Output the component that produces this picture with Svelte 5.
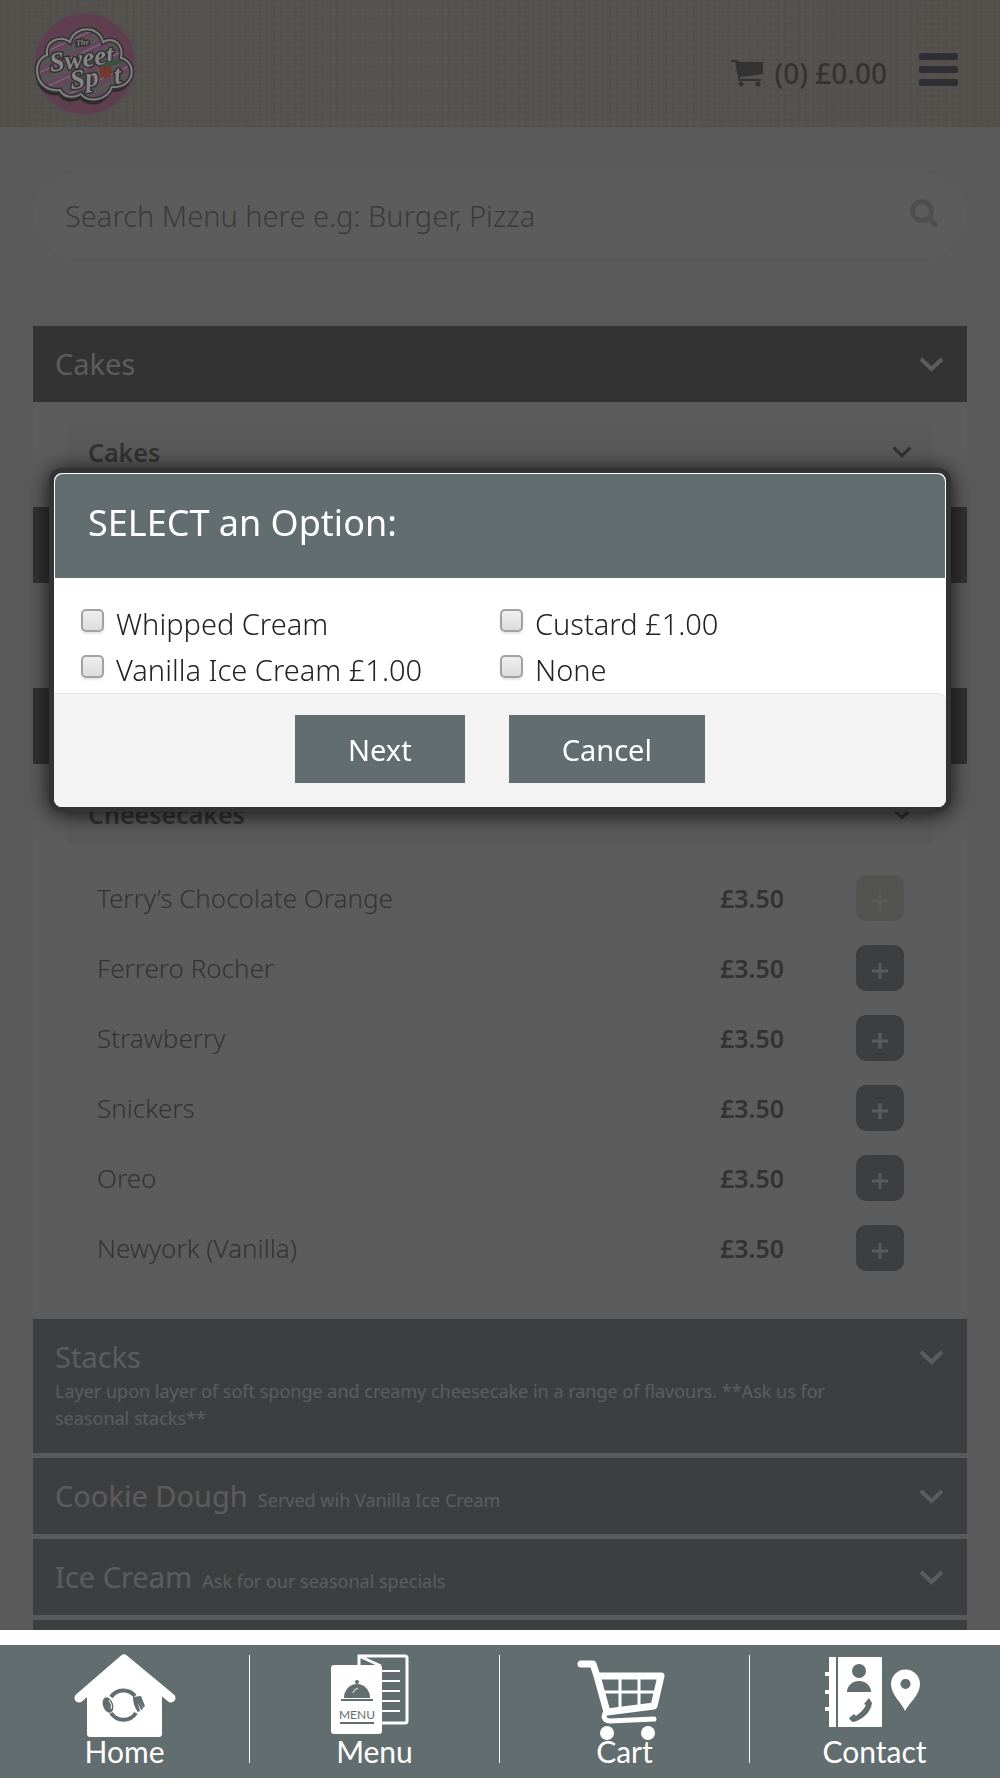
<script lang="ts">
    let search = $state('');
    let modalOpen = $state(true);

    let options = $state([
        { id: 'whipped', label: 'Whipped Cream', checked: false },
        { id: 'custard', label: 'Custard £1.00', checked: false },
        { id: 'vanilla', label: 'Vanilla Ice Cream £1.00', checked: false },
        { id: 'none', label: 'None', checked: false }
    ]);

    const cheesecakes = [
        { name: 'Terry’s Chocolate Orange', price: '£3.50', pending: true },
        { name: 'Ferrero Rocher', price: '£3.50', pending: false },
        { name: 'Strawberry', price: '£3.50', pending: false },
        { name: 'Snickers', price: '£3.50', pending: false },
        { name: 'Oreo', price: '£3.50', pending: false },
        { name: 'Newyork (Vanilla)', price: '£3.50', pending: false }
    ];

    function closeModal() {
        modalOpen = false;
    }
</script>

{#snippet chevron()}
    <svg class="chevron" viewBox="0 0 25 15" aria-hidden="true">
        <path d="M2 2 L12.5 12 L23 2" fill="none" stroke="currentColor" stroke-width="4" />
    </svg>
{/snippet}

{#snippet logo()}
    <svg class="logo" viewBox="0 0 104 106" role="img" aria-label="The Sweet Spot">
        <defs>
            <pattern id="stripes" width="16" height="16" patternUnits="userSpaceOnUse" patternTransform="rotate(-25)">
                <rect width="16" height="16" fill="#66465a" />
                <rect width="16" height="6" fill="#555" />
                <rect y="10" width="16" height="1" fill="#777" />
            </pattern>
        </defs>
        <circle cx="52" cy="53" r="51" fill="#5f3f4f" stroke="#554e52" stroke-width="2" />
        <path
            d="M14 44 C12 29 28 24 37 31 C42 14 66 14 70 31 C81 25 91 34 88 47 C104 51 103 77 79 76 C74 90 55 92 48 83 C40 88 30 86 27 79 C2 82 -3 50 14 44 Z"
            transform="translate(-1 5)"
            fill="#2b2b2b"
        />
        <path
            d="M14 44 C12 29 28 24 37 31 C42 14 66 14 70 31 C81 25 91 34 88 47 C104 51 103 77 79 76 C74 90 55 92 48 83 C40 88 30 86 27 79 C2 82 -3 50 14 44 Z"
            fill="url(#stripes)"
            stroke="#333"
            stroke-width="5"
        />
        <path
            d="M14 44 C12 29 28 24 37 31 C42 14 66 14 70 31 C81 25 91 34 88 47 C104 51 103 77 79 76 C74 90 55 92 48 83 C40 88 30 86 27 79 C2 82 -3 50 14 44 Z"
            fill="none"
            stroke="#808080"
            stroke-width="2"
        />
        <g class="logo-text" transform="rotate(-8 52 53)">
            <text x="46" y="34" font-size="8">The</text>
            <text x="17" y="56" font-size="27">Sweet</text>
            <text x="35" y="76" font-size="27">Sp</text>
            <text x="79" y="77" font-size="26">t</text>
        </g>
        <path d="M67 56 C72 50 79 53 79 60 C78 66 74 68 71 67 C67 65 65 60 67 56 Z" fill="#74392c" />
        <path d="M68 55 C73 49 82 47 90 51 C84 55 77 53 72 57 Z" fill="#3a5040" />
    </svg>
{/snippet}

<div class="page">
    <header class="topbar">
        {@render logo()}
        <div class="topbar-right">
            <a class="cart-link" href="#cart">
                <svg class="cart-icon" viewBox="0 0 32 28" aria-hidden="true">
                    <path d="M0 1 H7 L8 3 H32 V15 L9 18 L9 20 H30 V22 H7 L7 18 L4 3 H0 Z" />
                    <circle cx="10" cy="25" r="2.5" />
                    <circle cx="27" cy="25" r="2.5" />
                </svg>
                <span>(0) £0.00</span>
            </a>
            <button class="burger" aria-label="Open navigation">
                <span></span>
                <span></span>
                <span></span>
            </button>
        </div>
    </header>

    <main>
        <form class="search" role="search">
            <input
                type="text"
                aria-label="Search menu"
                placeholder="Search Menu here e.g: Burger, Pizza"
                bind:value={search}
            />
            <button type="button" aria-label="Search">
                <svg viewBox="0 0 28 28" aria-hidden="true">
                    <circle cx="12" cy="12" r="9.5" fill="none" stroke="currentColor" stroke-width="5" />
                    <path d="M19 19 L26 26" stroke="currentColor" stroke-width="5" stroke-linecap="round" />
                </svg>
            </button>
        </form>

        <section>
            <button class="category open"><span class="title">Cakes</span>{@render chevron()}</button>
            <div class="panel">
                <button class="subcategory">Cakes{@render chevron()}</button>
            </div>
        </section>

        <section>
            <button class="category open" aria-label="Category">{@render chevron()}</button>
            <div class="panel">
                <button class="subcategory" aria-label="Subcategory"></button>
            </div>
        </section>

        <section>
            <button class="category open" aria-label="Category">{@render chevron()}</button>
            <div class="panel">
                <button class="subcategory">Cheesecakes{@render chevron()}</button>
                <ul class="items">
                    {#each cheesecakes as item}
                        <li>
                            <span class="name">{item.name}</span>
                            <span class="price">{item.price}</span>
                            <button class="add" class:pending={item.pending} aria-label="Add {item.name}">
                                <svg viewBox="0 0 16 16" aria-hidden="true">
                                    <path d="M8 0 V16 M0 8 H16" stroke="currentColor" stroke-width="3" />
                                </svg>
                            </button>
                        </li>
                    {/each}
                </ul>
            </div>
        </section>

        <div class="closed">
            <button class="category">
                <span class="title">Stacks</span>
                <span class="desc">
                    Layer upon layer of soft sponge and creamy cheesecake in a range of flavours. **Ask us for seasonal stacks**
                </span>
                {@render chevron()}
            </button>
            <button class="category">
                <span class="title">Cookie Dough</span>
                <span class="note">Served wih Vanilla Ice Cream</span>
                {@render chevron()}
            </button>
            <button class="category">
                <span class="title">Ice Cream</span>
                <span class="note">Ask for our seasonal specials</span>
                {@render chevron()}
            </button>
            <button class="category" aria-label="Category"></button>
        </div>
    </main>
</div>

{#if modalOpen}
    <div class="overlay">
        <div class="modal" role="dialog" aria-labelledby="modal-title">
            <h2 id="modal-title">SELECT an Option:</h2>
            <div class="options">
                {#each options as option}
                    <div class="option">
                        <input type="checkbox" id={option.id} bind:checked={option.checked} />
                        <label for={option.id}>{option.label}</label>
                    </div>
                {/each}
            </div>
            <div class="actions">
                <button onclick={closeModal}>Next</button>
                <button onclick={closeModal}>Cancel</button>
            </div>
        </div>
    </div>
{/if}

<nav>
    <a href="#home">
        <svg viewBox="0 0 120 84" aria-hidden="true">
            <path d="M14 43 L59 4 L106 43" fill="none" stroke="#fff" stroke-width="9" stroke-linecap="round" stroke-linejoin="round" />
            <path d="M22 40 L59 6 L97 40 V79 Q97 82 94 82 H25 Q22 82 22 79 Z" fill="#fff" />
            <path d="M46 42 A15 15 0 0 1 70 41 M46 58 A15 15 0 0 0 71 58" fill="none" stroke="#626d70" stroke-width="4" />
            <ellipse cx="43" cy="50" rx="5" ry="8" transform="rotate(-20 43 50)" fill="#626d70" />
            <path d="M44 45 Q48 50 46 54" fill="none" stroke="#fff" stroke-width="1" />
            <path
                d="M68 42 L76 41 L80 51 L78 53 L75 47 L78 54 L76 55 L73 48 L75 56 L73 57 Q68 51 68 42 Z"
                fill="#626d70"
            />
        </svg>
        <span>Home</span>
    </a>
    <a href="#menu">
        <svg viewBox="0 0 120 84" aria-hidden="true">
            <path d="M44 12 V1 H90 Q92 1 92 3 V66 Q92 68 90 68 H66 M44 1 L66 11" fill="none" stroke="#fff" stroke-width="3" />
            <rect x="16" y="10" width="51" height="69" rx="3" fill="#fff" />
            <path d="M66 16 H85 M66 26 H85 M66 36 H85 M66 46 H85 M66 56 H85" stroke="#fff" stroke-width="2" />
            <path d="M29 43 A13 14 0 0 1 55 43 Z" fill="#626d70" />
            <path d="M38 38 Q39 34 43 33" fill="none" stroke="#fff" stroke-width="1" />
            <circle cx="42" cy="27" r="2" fill="#626d70" />
            <path d="M26 45 H58 M25 68 H59" stroke="#626d70" stroke-width="2" />
            <text x="42" y="64" font-size="12" text-anchor="middle" fill="#626d70">MENU</text>
        </svg>
        <span>Menu</span>
    </a>
    <a href="#cart">
        <svg viewBox="0 0 120 84" aria-hidden="true">
            <g fill="none" stroke="#fff" stroke-linecap="round" stroke-linejoin="round">
                <path d="M16 9 H28 L32 21 L42 57 L89 51 L96 21 H33" stroke-width="7" />
                <path d="M40 58 L39 62 Q40 66 45 66 L89 64" stroke-width="5" />
                <path d="M37 37 H93 M55 22 V54 M74 22 V52" stroke-width="3" />
            </g>
            <circle cx="42" cy="78" r="7" fill="#fff" />
            <circle cx="83" cy="78" r="7" fill="#fff" />
        </svg>
        <span>Cart</span>
    </a>
    <a href="#contact">
        <svg viewBox="0 0 120 84" aria-hidden="true">
            <path d="M14 2 H21 V72 H14 V56 H10 V52 H14 V39 H10 V35 H14 V21 H10 V17 H14 Z" fill="#fff" />
            <rect x="23" y="2" width="44" height="70" fill="#fff" />
            <circle cx="44" cy="16" r="7" fill="#626d70" />
            <path d="M32 37 A12 11 0 0 1 56 37 Z" fill="#626d70" />
            <path d="M54 43 L57 48 Q55 61 39 67 Q36 67 34 63 L39 59 L41 61 Q48 56 51 50 L49 49 Z" fill="#626d70" />
            <path
                d="M90 56 C87 48 76 40 76 29 A14 14 0 0 1 105 29 C105 40 94 48 90 56 Z M90 24 A5 5 0 1 0 91 24 Z"
                fill="#fff"
                fill-rule="evenodd"
            />
        </svg>
        <span>Contact</span>
    </a>
</nav>

<style>
    :global(body) {
        background: #f4f4f4;
        font-family: 'Noto Sans', 'Open Sans', sans-serif;
        color: #333;
    }

    button,
    input {
        font: inherit;
        color: inherit;
        border: 0;
        margin: 0;
        padding: 0;
        box-sizing: border-box;
    }

    button {
        cursor: pointer;
    }

    .topbar {
        display: flex;
        justify-content: space-between;
        align-items: flex-start;
        box-sizing: border-box;
        height: 127px;
        padding: 11px 42px 0 33px;
        background:
            repeating-linear-gradient(90deg, rgba(90, 60, 30, 0.08) 0 2px, transparent 2px 7px),
            repeating-linear-gradient(0deg, rgba(90, 60, 30, 0.08) 0 2px, transparent 2px 6px),
            linear-gradient(90deg, #dccdb9, #e2ddd0 35%, #ded9d0 70%, #dacbb8);
    }

    /* the logo stays brighter than the dimmed page */
    .logo {
        position: relative;
        z-index: 11;
        width: 104px;
        height: 106px;
    }

    .logo-text {
        font-family: 'Liberation Serif', serif;
        font-style: italic;
        font-weight: bold;
        fill: #858585;
        stroke: #333;
        stroke-width: 3px;
        paint-order: stroke;
    }

    .topbar-right {
        display: flex;
        align-items: center;
        gap: 32px;
        padding-top: 42px;
    }

    .cart-link {
        display: flex;
        align-items: center;
        gap: 12px;
        color: #333;
        font-size: 28px;
        font-weight: 500;
        line-height: 40px;
        text-decoration: none;
    }

    .cart-icon {
        width: 32px;
        height: 28px;
        fill: #333;
    }

    .burger {
        display: flex;
        flex-direction: column;
        align-self: flex-start;
        gap: 6px;
        width: 39px;
        background: none;
    }

    .burger span {
        height: 7px;
        border-radius: 2px;
        background: #14202f;
    }

    main {
        padding: 45px 33px 82px;
    }

    .search {
        display: flex;
        align-items: center;
        height: 87px;
        box-sizing: border-box;
        margin-bottom: 67px;
        padding: 0 28px 0 31px;
        border: 1px solid #f4f4f4;
        border-radius: 44px;
        background: #fff;
    }

    .search input {
        flex: 1;
        min-width: 0;
        font-size: 29px;
        font-weight: 300;
        background: none;
    }

    .search input::placeholder {
        color: #5a5a5a;
        opacity: 1;
    }

    .search button {
        width: 28px;
        padding-bottom: 6px;
        color: #bbb;
        background: none;
    }

    .search svg {
        display: block;
        width: 28px;
        height: 28px;
    }

    .category {
        display: block;
        position: relative;
        width: 100%;
        min-height: 76px;
        padding: 19px 90px 19px 22px;
        background: #666a74;
        color: #fff;
        text-align: left;
    }

    .category.open {
        background: #333;
    }

    .title {
        font-size: 29px;
        font-weight: 400;
        line-height: 38px;
    }

    .note,
    .desc {
        font-size: 18px;
        line-height: 27px;
    }

    .note {
        margin-left: 6px;
    }

    .desc {
        display: block;
        padding: 2px 0;
    }

    .chevron {
        width: 25px;
        height: 15px;
    }

    .category .chevron {
        position: absolute;
        top: 31px;
        right: 23px;
    }

    .panel {
        padding: 22px 33px 25px;
        border-radius: 0 0 8px 8px;
        background: #fff;
    }

    .subcategory {
        display: flex;
        align-items: center;
        justify-content: space-between;
        width: 100%;
        height: 58px;
        padding: 0 22px 2px;
        border-radius: 8px 8px 0 0;
        background: #f0f0f0;
        font-size: 25px;
        font-weight: 600;
    }

    .subcategory .chevron {
        width: 20px;
        height: 12px;
    }

    .items {
        margin: 19px 30px 11px 31px;
        padding: 0;
        list-style: none;
    }

    .items li {
        display: flex;
        align-items: center;
        box-sizing: border-box;
        height: 70px;
        border-bottom: 1px dotted #e6e6e6;
        font-size: 25px;
    }

    .items li:last-child {
        border-bottom: 0;
    }

    .name {
        flex: 1;
        font-size: 26px;
        font-weight: 300;
    }

    .price {
        margin-right: 72px;
        font-weight: 600;
    }

    .add {
        display: grid;
        place-items: center;
        width: 48px;
        height: 46px;
        padding-top: 6px;
        border-radius: 10px;
        background: #666a74;
        color: #fff;
    }

    .add.pending {
        background: #d2cfbc;
    }

    .add svg {
        width: 16px;
        height: 16px;
    }

    .closed {
        display: grid;
        gap: 5px;
    }

    .overlay {
        position: fixed;
        inset: 0;
        z-index: 10;
        box-sizing: border-box;
        padding: 468px 49px 0;
        background: rgba(51, 51, 51, 0.8);
    }

    .modal {
        border: 5px solid #333;
        border-radius: 13px;
        background: #fff;
        box-shadow: 0 2px 22px rgba(0, 0, 0, 0.8);
        overflow: hidden;
    }

    .modal h2 {
        margin: 1px 1px 0;
        padding: 25px 33px 31px;
        border-radius: 8px 8px 0 0;
        background: #626d70;
        color: #fff;
        font-size: 36px;
        font-weight: 400;
        line-height: 48px;
    }

    .options {
        display: grid;
        grid-template-columns: 1fr 1fr;
        padding: 23px 27px 0;
    }

    .option {
        display: flex;
        align-items: flex-start;
        gap: 12px;
        height: 46px;
        color: #222;
        font-size: 29px;
        font-weight: 300;
        line-height: 46px;
    }

    .option input {
        appearance: none;
        width: 23px;
        height: 23px;
        margin-top: 8px;
        border: 2px solid #a2a2a2;
        border-radius: 5px;
        background: linear-gradient(#efefef, #dcdcdc);
        box-shadow: 0 2px 2px rgba(0, 0, 0, 0.1);
    }

    .option input:checked {
        background: #626d70;
    }

    .actions {
        display: flex;
        justify-content: center;
        gap: 44px;
        padding: 21px 0 24px;
        border-top: 1px solid #e5e5e5;
        border-radius: 0 8px 0 0;
        background: #f3f3f3;
    }

    .actions button {
        height: 68px;
        padding: 0 53px;
        background: #626d70;
        color: #fff;
        font-size: 29px;
    }

    nav {
        position: fixed;
        right: 0;
        bottom: 0;
        left: 0;
        z-index: 20;
        display: grid;
        grid-template-columns: repeat(4, 1fr);
        padding: 10px 0 15px;
        border-top: 15px solid #fff;
        background: #626d70;
    }

    nav a {
        display: flex;
        flex-direction: column;
        align-items: center;
        border-right: 1px solid #fff;
        color: #fff;
        font-family: Lato, sans-serif;
        font-size: 30px;
        line-height: 24px;
        text-decoration: none;
    }

    nav a:last-child {
        border-right-color: transparent;
    }

    nav svg {
        width: 120px;
        height: 84px;
        overflow: visible;
    }
</style>
